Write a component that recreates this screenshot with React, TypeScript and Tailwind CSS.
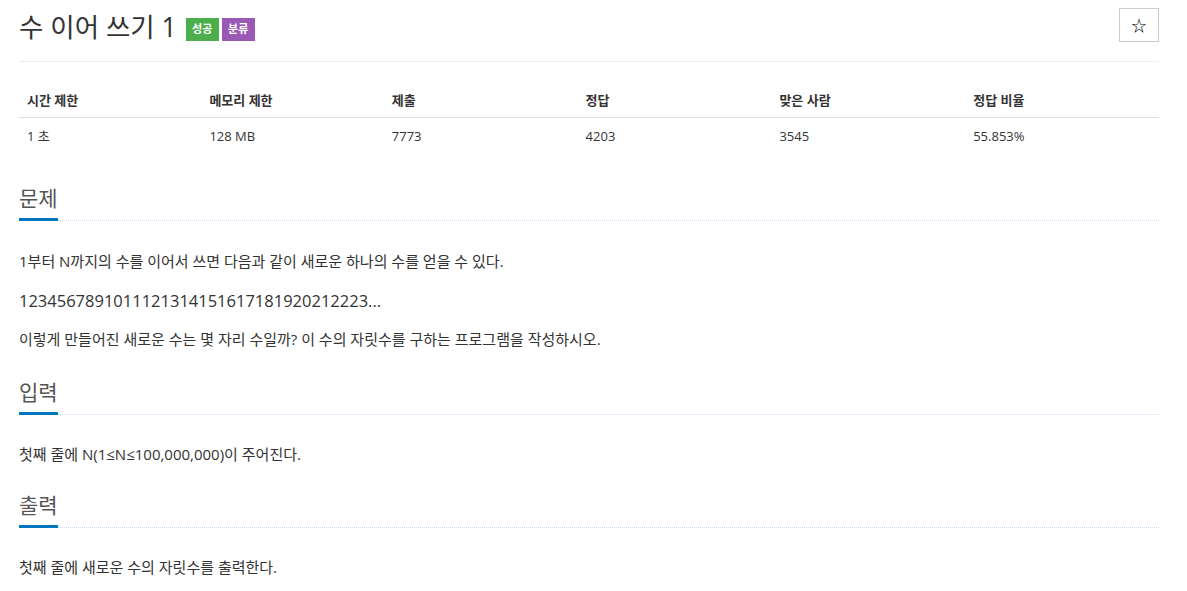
import React from 'react'

const font = { fontFamily: '"Open Sans", "Noto Sans CJK KR", sans-serif' }

const stats = [
  ['시간 제한', '1 초'],
  ['메모리 제한', '128 MB'],
  ['제출', '7773'],
  ['정답', '4203'],
  ['맞은 사람', '3545'],
  ['정답 비율', '55.853%'],
]

function Headline({ title }: { title: string }) {
  return (
    <div className="flex items-end">
      <h2 className="border-b-[3px] border-[#0076c0] pb-[5px] text-[21px] leading-[30px] text-[#555]">
        {title}
      </h2>
      <div className="flex-1 border-b border-dotted border-[#c8daf0]" />
    </div>
  )
}

export default function App() {
  return (
    <div className="min-h-screen bg-white pl-[19px] pr-[28px] pt-[6px] text-[#333]" style={font}>
      {/* title */}
      <div className="flex items-start justify-between border-b border-[#eee] pb-[13px]">
        <div className="flex items-center gap-[9px]">
          <h1 className="text-[26.5px] leading-[42px] text-[#333]">수 이어 쓰기 1</h1>
          <div className="mt-[4px] flex gap-[3px]">
            <span className="flex h-[23px] w-[33px] items-center justify-center bg-[#4cae4c] text-[11px] font-bold text-white">
              성공
            </span>
            <span className="flex h-[23px] w-[33px] items-center justify-center bg-[#9b59b6] text-[11px] font-bold text-white">
              분류
            </span>
          </div>
        </div>
        <button className="mt-[2px] flex h-[34px] w-[40px] items-center justify-center border border-[#ccc] text-[15px] text-black">
          ☆
        </button>
      </div>

      {/* stats table */}
      <table className="mt-[29px] w-full border-collapse text-[13px]">
        <thead>
          <tr className="border-b border-[#ddd]">
            {stats.map(([h], i) => (
              <th
                key={h}
                className={`px-[8px] pb-[6px] text-left font-bold ${i < 2 ? 'w-[16%]' : 'w-[17%]'}`}
              >
                {h}
              </th>
            ))}
          </tr>
        </thead>
        <tbody>
          <tr>
            {stats.map(([h, v]) => (
              <td key={h} className="px-[8px] pt-[9px] pb-[8px]">
                {v}
              </td>
            ))}
          </tr>
        </tbody>
      </table>

      {/* 문제 */}
      <div className="mt-[29px]">
        <Headline title="문제" />
        <div className="mt-[29px] space-y-[16px] text-[15px] leading-[23px]">
          <p>1부터 N까지의 수를 이어서 쓰면 다음과 같이 새로운 하나의 수를 얻을 수 있다.</p>
          <p className="text-[16.5px]">1234567891011121314151617181920212223...</p>
          <p>이렇게 만들어진 새로운 수는 몇 자리 수일까? 이 수의 자릿수를 구하는 프로그램을 작성하시오.</p>
        </div>
      </div>

      {/* 입력 */}
      <div className="mt-[26px]">
        <Headline title="입력" />
        <p className="mt-[28px] text-[15px] leading-[23px]">첫째 줄에 N(1≤N≤100,000,000)이 주어진다.</p>
      </div>

      {/* 출력 */}
      <div className="mt-[24px]">
        <Headline title="출력" />
        <p className="mt-[28px] text-[15px] leading-[23px]">첫째 줄에 새로운 수의 자릿수를 출력한다.</p>
      </div>
    </div>
  )
}
